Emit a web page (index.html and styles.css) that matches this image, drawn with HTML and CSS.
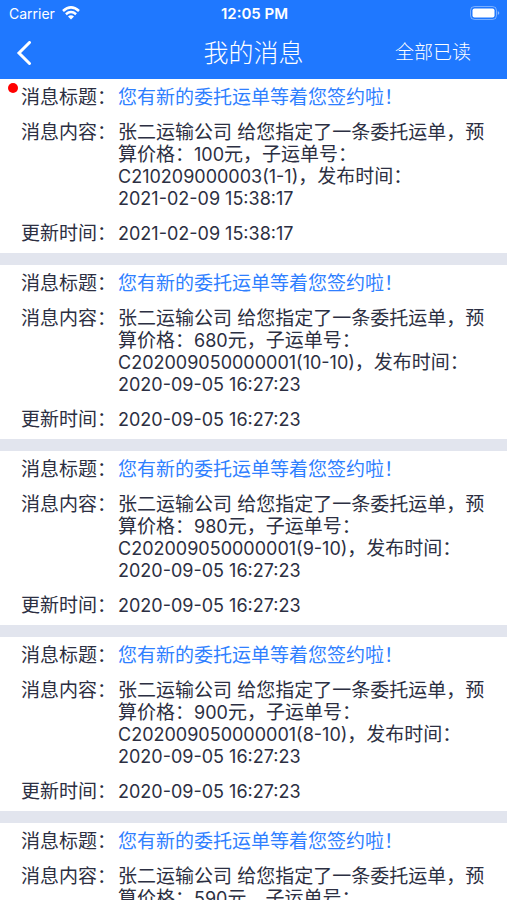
FILE: index.html
```html
<!DOCTYPE html>
<html lang="zh-CN">
<head>
<meta charset="utf-8">
<meta name="viewport" content="width=device-width, initial-scale=1">
<title>我的消息</title>
<link rel="stylesheet" href="styles.css">
</head>
<body>
<div class="screen">
  <header class="top">
    <div class="status">
      <div class="carrier">
        <span>Carrier</span>
        <svg class="wifi" viewBox="0 0 18 14" aria-hidden="true">
          <path d="M1 4.9 Q9 -2.1 17 4.9" fill="none" stroke="#fff" stroke-width="2.6"/>
          <path d="M3.9 8.2 Q9 3.9 14.1 8.2" fill="none" stroke="#fff" stroke-width="2.5"/>
          <path d="M6 10.5 Q9 8 12 10.5 L9 13.6Z" fill="#fff"/>
        </svg>
      </div>
      <span class="clock">12:05 PM</span>
      <svg class="battery" viewBox="0 0 30 14" aria-hidden="true">
        <rect x=".5" y=".5" width="26" height="13" rx="4" fill="none" stroke="#fff" stroke-opacity=".4"/>
        <rect x="2.5" y="2.5" width="22" height="9" rx="2" fill="#fff"/>
        <path d="M27.8 5 Q30.8 7 27.8 9Z" fill="#fff" fill-opacity=".5"/>
      </svg>
    </div>
    <nav class="bar">
      <button class="back" type="button" aria-label="返回">
        <svg viewBox="0 0 16 24" aria-hidden="true"><path d="M13.5 1.5 L3 12 L13.5 22.5" fill="none" stroke="#fff" stroke-width="3" stroke-linecap="round"/></svg>
      </button>
      <h1>我的消息</h1>
      <button class="read-all" type="button">全部已读</button>
    </nav>
  </header>
  <main class="list">
    <article class="message unread">
      <dl>
        <dt>消息标题：</dt><dd><a href="#">您有新的委托运单等着您签约啦！</a></dd>
        <dt>消息内容：</dt><dd>张二运输公司 给您指定了一条委托运单，预算价格：<span class="num">100</span>元，子运单号：<br><span class="num">C210209000003(1-1)</span>，发布时间：<br><span class="num">2021-02-09 15:38:17</span></dd>
        <dt>更新时间：</dt><dd><span class="num">2021-02-09 15:38:17</span></dd>
      </dl>
    </article>
    <article class="message">
      <dl>
        <dt>消息标题：</dt><dd><a href="#">您有新的委托运单等着您签约啦！</a></dd>
        <dt>消息内容：</dt><dd>张二运输公司 给您指定了一条委托运单，预算价格：<span class="num">680</span>元，子运单号：<br><span class="num">C202009050000001(10-10)</span>，发布时间：<br><span class="num">2020-09-05 16:27:23</span></dd>
        <dt>更新时间：</dt><dd><span class="num">2020-09-05 16:27:23</span></dd>
      </dl>
    </article>
    <article class="message">
      <dl>
        <dt>消息标题：</dt><dd><a href="#">您有新的委托运单等着您签约啦！</a></dd>
        <dt>消息内容：</dt><dd>张二运输公司 给您指定了一条委托运单，预算价格：<span class="num">980</span>元，子运单号：<br><span class="num">C202009050000001(9-10)</span>，发布时间：<br><span class="num">2020-09-05 16:27:23</span></dd>
        <dt>更新时间：</dt><dd><span class="num">2020-09-05 16:27:23</span></dd>
      </dl>
    </article>
    <article class="message">
      <dl>
        <dt>消息标题：</dt><dd><a href="#">您有新的委托运单等着您签约啦！</a></dd>
        <dt>消息内容：</dt><dd>张二运输公司 给您指定了一条委托运单，预算价格：<span class="num">900</span>元，子运单号：<br><span class="num">C202009050000001(8-10)</span>，发布时间：<br><span class="num">2020-09-05 16:27:23</span></dd>
        <dt>更新时间：</dt><dd><span class="num">2020-09-05 16:27:23</span></dd>
      </dl>
    </article>
    <article class="message">
      <dl>
        <dt>消息标题：</dt><dd><a href="#">您有新的委托运单等着您签约啦！</a></dd>
        <dt>消息内容：</dt><dd>张二运输公司 给您指定了一条委托运单，预算价格：<span class="num">590</span>元，子运单号：</dd>
      </dl>
    </article>
  </main>
</div>
</body>
</html>
```
FILE: styles.css
```css
* { box-sizing: border-box; }

body {
  margin: 0;
  background: #fff;
  color: #2c2f42;
  font-family: Inter, "Noto Sans CJK SC", sans-serif;
}

.screen {
  height: 100vh;
  display: flex;
  flex-direction: column;
  overflow: hidden;
}

.top {
  flex: none;
  background: #1f78ff;
  color: #fff;
}

.status {
  display: grid;
  grid-template-columns: 1fr auto 1fr;
  align-items: center;
  height: 26px;
  padding: 0 7px 0 9px;
  font-size: 14px;
}

.carrier {
  display: flex;
  align-items: center;
  gap: 7px;
}

.wifi { width: 18px; height: 14px; }

.clock {
  font-size: 15px;
  font-weight: 600;
}

.battery {
  width: 30px;
  height: 14px;
  justify-self: end;
}

.bar {
  display: grid;
  grid-template-columns: 1fr auto 1fr;
  align-items: center;
  height: 53px;
  padding: 0 16px;
}

.bar h1 {
  margin: 0;
  font-size: 25px;
  line-height: 36px;
  font-weight: 300;
}

.bar button {
  padding: 0;
  border: 0;
  background: none;
  color: inherit;
  font: inherit;
}

.back { justify-self: start; }

.back svg {
  display: block;
  width: 16px;
  height: 24px;
}

.bar .read-all {
  justify-self: end;
  margin-right: 20px;
  font-size: 19px;
  line-height: 22px;
  font-weight: 300;
}

.list {
  flex: 1;
  min-height: 0;
  overflow: hidden;
}

.message {
  position: relative;
  padding: 8px 21px;
  border-bottom: 12px solid #e2e5ee;
}

.unread::before {
  content: "";
  position: absolute;
  top: 4px;
  left: 8px;
  width: 10px;
  height: 10px;
  border-radius: 50%;
  background: #f00;
}

.message dl {
  display: grid;
  grid-template-columns: 97px 1fr;
  row-gap: 13px;
  margin: 0;
  font-size: 19px;
  line-height: 22px;
}

.message dt { white-space: nowrap; }

.message dd { margin: 0; }

.num { font-size: 18px; }

.message a {
  color: #2f7fff;
  text-decoration: none;
}
```
